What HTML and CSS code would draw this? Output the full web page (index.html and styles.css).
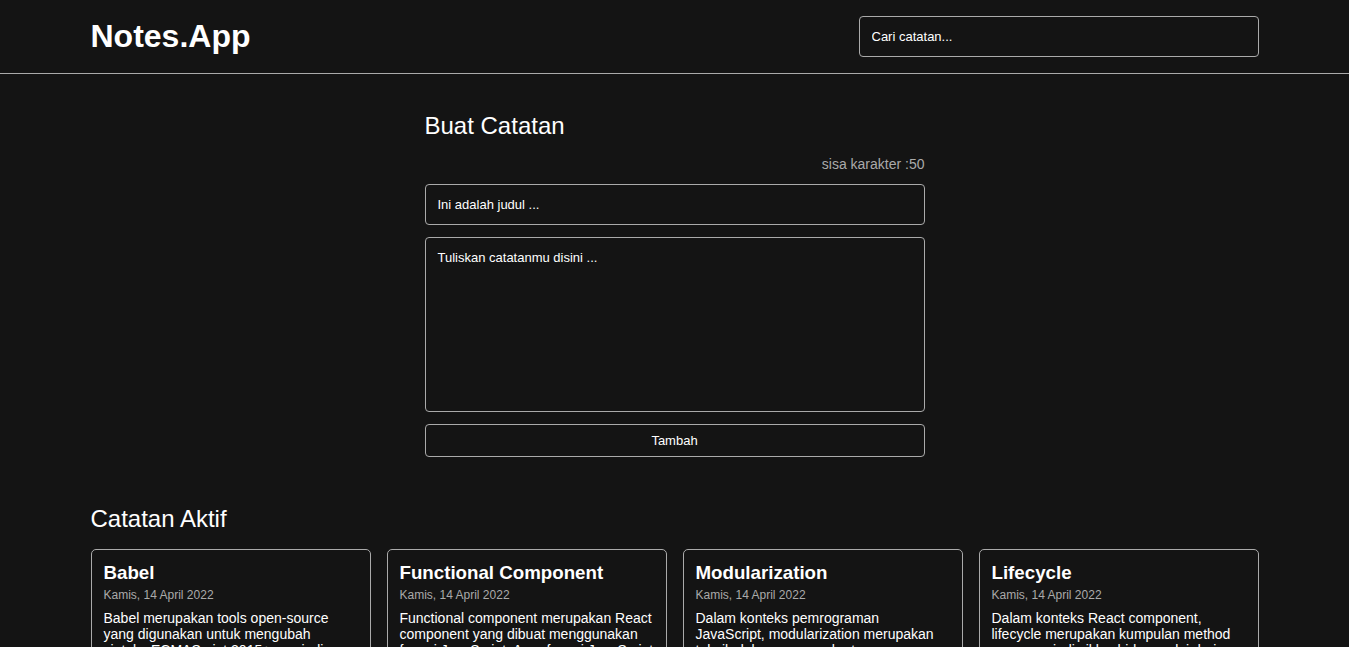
FILE: index.html
```html
<!DOCTYPE html>
<html lang="id">
<head>
<meta charset="utf-8">
<title>Notes.App</title>
<link rel="stylesheet" href="styles.css">
</head>
<body>
<header class="app-header">
  <div class="header-inner">
    <h1 class="brand">Notes.App</h1>
    <input class="search" type="text" placeholder="Cari catatan...">
  </div>
</header>
<main class="app-body">
  <section class="note-input">
    <h2 class="section-title">Buat Catatan</h2>
    <p class="char-limit">sisa karakter :50</p>
    <form class="note-form">
      <input class="field" type="text" placeholder="Ini adalah judul ...">
      <textarea class="field field-body" placeholder="Tuliskan catatanmu disini ..."></textarea>
      <button class="submit" type="button">Tambah</button>
    </form>
  </section>
  <h2 class="section-title list-title">Catatan Aktif</h2>
  <div class="notes-list">
    <article class="note-item">
      <h3 class="note-title">Babel</h3>
      <p class="note-date">Kamis, 14 April 2022</p>
      <p class="note-body">Babel merupakan tools open-source yang digunakan untuk mengubah sintaks ECMAScript 2015+ menjadi sintaks yang didukung oleh JavaScript engine versi lama.</p>
    </article>
    <article class="note-item">
      <h3 class="note-title">Functional Component</h3>
      <p class="note-date">Kamis, 14 April 2022</p>
      <p class="note-body">Functional component merupakan React component yang dibuat menggunakan fungsi JavaScript. Agar fungsi JavaScript dapat disebut component ia harus mengembalikan React element.</p>
    </article>
    <article class="note-item">
      <h3 class="note-title">Modularization</h3>
      <p class="note-date">Kamis, 14 April 2022</p>
      <p class="note-body">Dalam konteks pemrograman JavaScript, modularization merupakan teknik dalam memecah atau menggunakan kode dalam berkas JavaScript secara terpisah.</p>
    </article>
    <article class="note-item">
      <h3 class="note-title">Lifecycle</h3>
      <p class="note-date">Kamis, 14 April 2022</p>
      <p class="note-body">Dalam konteks React component, lifecycle merupakan kumpulan method yang menjadi siklus hidup mulai dari component dibuat (constructor), dicetak (render), dan sebagainya.</p>
    </article>
  </div>
</main>
</body>
</html>
```
FILE: styles.css
```css
* { box-sizing: border-box; }
html, body {
  margin: 0;
  padding: 0;
  background: #141414;
  color: #ffffff;
  font-family: "Liberation Sans", Arial, sans-serif;
}
.app-header {
  border-bottom: 1px solid #aaaaaa;
}
.header-inner {
  width: 1168px;
  margin: 0 auto;
  padding: 16px 0;
  display: flex;
  align-items: center;
  justify-content: space-between;
}
.brand {
  margin: 0;
  font-size: 32px;
  font-weight: bold;
  line-height: 41px;
}
.search, .field, .submit {
  font-family: "Liberation Sans", Arial, sans-serif;
  font-size: 13px;
  line-height: 15px;
  color: #ffffff;
  background: transparent;
  border: 1px solid #aaaaaa;
  border-radius: 4px;
}
.search {
  width: 400px;
  height: 41px;
  padding: 12px;
}
::placeholder {
  color: #ffffff;
  opacity: 1;
}
.app-body {
  width: 1168px;
  margin: 0 auto;
  padding: 38px 0 40px;
}
.note-input {
  width: 500px;
  margin: 0 auto;
}
.section-title {
  margin: 0;
  font-size: 24px;
  font-weight: normal;
  line-height: 28px;
}
.char-limit {
  margin: 16px 0 12px;
  text-align: right;
  font-size: 14px;
  line-height: 16px;
  color: #aaaaaa;
}
.note-form {
  display: flex;
  flex-direction: column;
  gap: 12px;
}
.field {
  width: 100%;
  height: 41px;
  padding: 12px;
  display: block;
}
.field-body {
  height: 175px;
  resize: none;
}
.submit {
  width: 100%;
  height: 33px;
  padding: 8px;
  text-align: center;
}
.list-title {
  margin-top: 48px;
  margin-bottom: 16px;
}
.notes-list {
  display: grid;
  grid-template-columns: repeat(4, 1fr);
  gap: 16px;
}
.note-item {
  border: 1px solid #aaaaaa;
  border-radius: 5px;
  padding: 12px;
}
.note-title {
  margin: 0;
  font-size: 18.72px;
  font-weight: bold;
  line-height: 21.5px;
}
.note-date {
  margin: 4px 0 8px;
  font-size: 12px;
  line-height: 14px;
  color: #aaaaaa;
}
.note-body {
  margin: 0;
  font-size: 14px;
  line-height: 16px;
}
```
